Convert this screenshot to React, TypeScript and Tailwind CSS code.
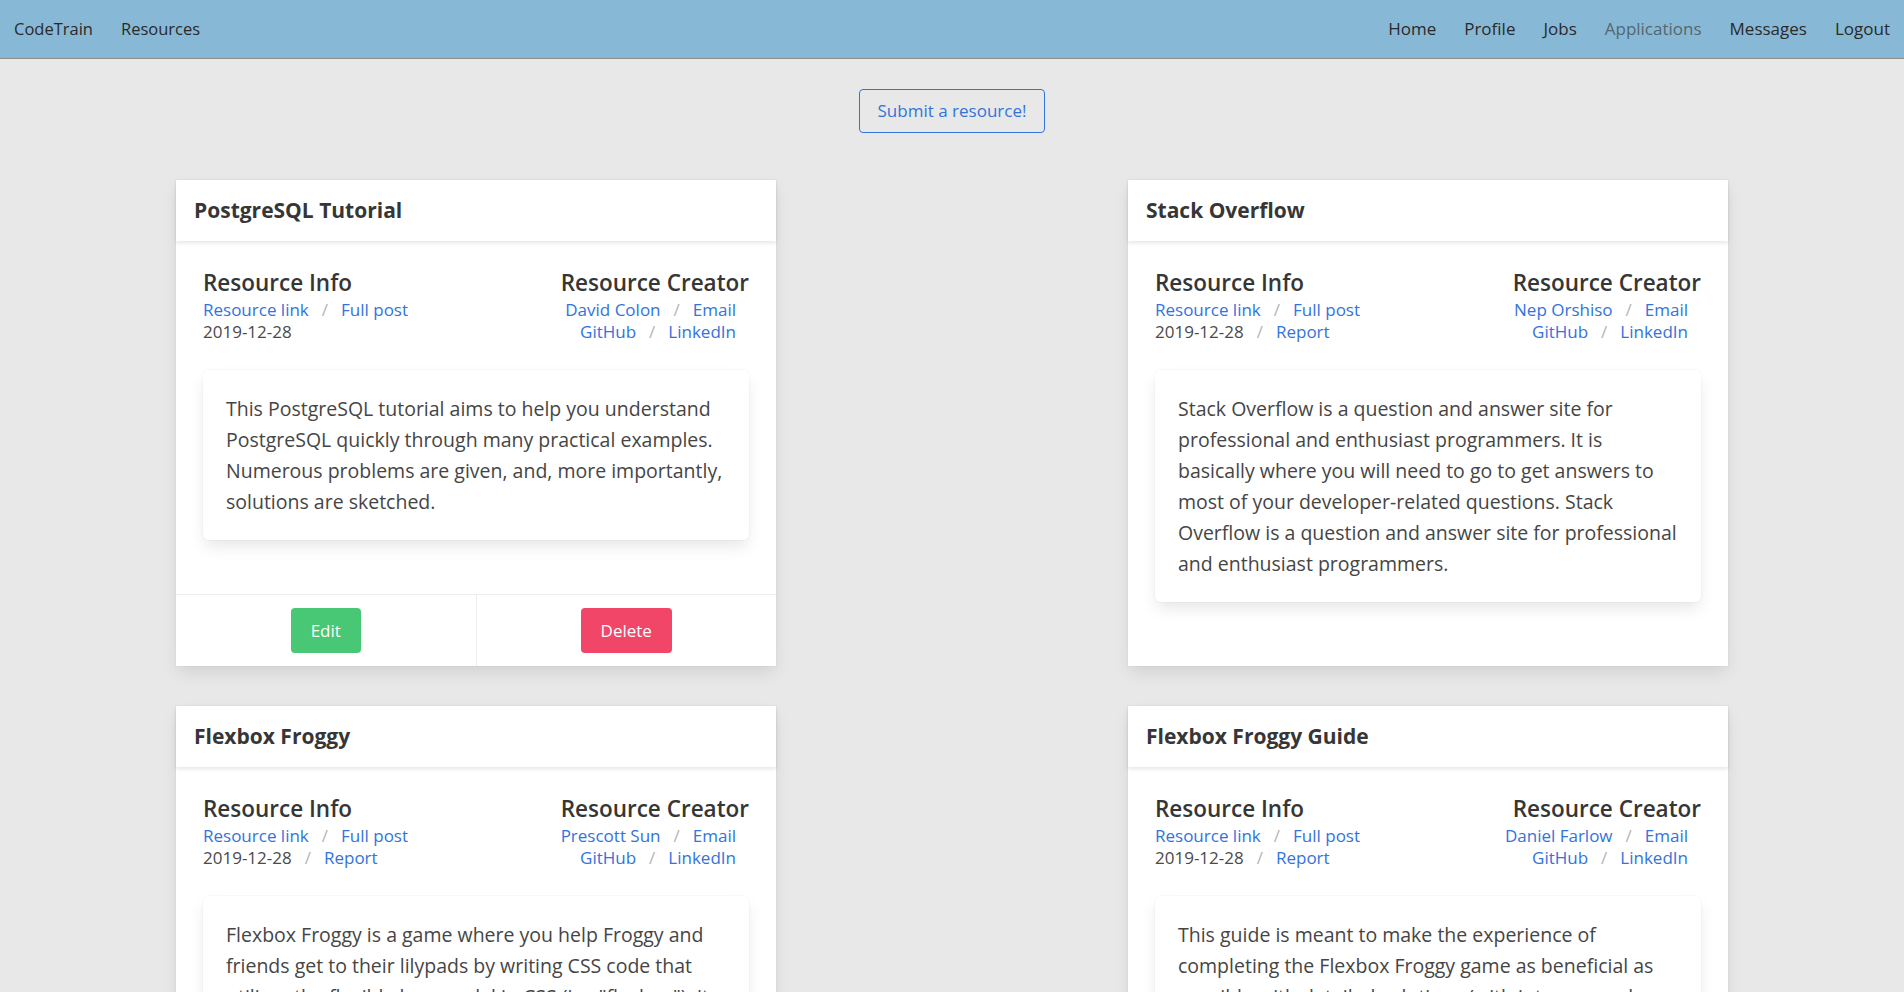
import React from "react";

type Crumb = { label: string; link?: boolean };

type Resource = {
  title: string;
  creator: string;
  report: boolean;
  text: string;
  owner?: boolean;
};

const resources: Resource[] = [
  {
    title: "PostgreSQL Tutorial",
    creator: "David Colon",
    report: false,
    owner: true,
    text: "This PostgreSQL tutorial aims to help you understand PostgreSQL quickly through many practical examples. Numerous problems are given, and, more importantly, solutions are sketched.",
  },
  {
    title: "Stack Overflow",
    creator: "Nep Orshiso",
    report: true,
    text: "Stack Overflow is a question and answer site for professional and enthusiast programmers. It is basically where you will need to go to get answers to most of your developer-related questions. Stack Overflow is a question and answer site for professional and enthusiast programmers.",
  },
  {
    title: "Flexbox Froggy",
    creator: "Prescott Sun",
    report: true,
    text: "Flexbox Froggy is a game where you help Froggy and friends get to their lilypads by writing CSS code that utilizes the flexible box model in CSS (i.e. \"flexbox\"). It is a fun way to learn how flexbox works.",
  },
  {
    title: "Flexbox Froggy Guide",
    creator: "Daniel Farlow",
    report: true,
    text: "This guide is meant to make the experience of completing the Flexbox Froggy game as beneficial as possible with detailed solutions (with interspersed notes) for every one of the levels.",
  },
];

// bulma-like breadcrumb: "a / b / c"
const Breadcrumb = ({ items, right }: { items: Crumb[]; right?: boolean }) => (
  <ul className={`flex text-[17px] leading-[22px] ${right ? "justify-end" : ""}`}>
    {items.map((item, i) => (
      <li key={item.label} className="flex items-center">
        {i > 0 && <span className="text-[#b5b5b5]">/</span>}
        <span
          className={`px-[13px] ${i === 0 ? "pl-0" : ""} ${
            item.link ? "text-[#3273dc] cursor-pointer" : "text-[#4a4a4a]"
          }`}
        >
          {item.label}
        </span>
      </li>
    ))}
  </ul>
);

const ResourceCard = ({ res }: { res: Resource }) => {
  const dateLine: Crumb[] = [{ label: "2019-12-28" }];
  if (res.report) dateLine.push({ label: "Report", link: true });

  return (
    <div className="w-[600px] mx-auto bg-white flex flex-col shadow-[0_8px_16px_-2px_rgba(10,10,10,0.1),0_0_0_1px_rgba(10,10,10,0.02)]">
      {/* header */}
      <div className="h-[61px] px-[18px] flex items-center shadow-[0_2px_4px_rgba(10,10,10,0.1)]">
        <h2 className="text-[21px] font-bold text-[#363636]">{res.title}</h2>
      </div>

      {/* content */}
      <div className="px-[27px] pt-[26px] pb-[54px]">
        <div className="flex justify-between">
          <div>
            <h3 className="text-[22.5px] leading-[32px] font-semibold text-[#363636]">
              Resource Info
            </h3>
            <Breadcrumb
              items={[
                { label: "Resource link", link: true },
                { label: "Full post", link: true },
              ]}
            />
            <Breadcrumb items={dateLine} />
          </div>
          <div className="text-right">
            <h3 className="text-[22.5px] leading-[32px] font-semibold text-[#363636]">
              Resource Creator
            </h3>
            <Breadcrumb
              right
              items={[
                { label: res.creator, link: true },
                { label: "Email", link: true },
              ]}
            />
            <Breadcrumb
              right
              items={[
                { label: "GitHub", link: true },
                { label: "LinkedIn", link: true },
              ]}
            />
          </div>
        </div>

        <div className="mt-[27px] bg-white rounded-[6px] p-[23px] text-[19.5px] leading-[31px] text-[#454545] shadow-[0_8px_16px_-2px_rgba(10,10,10,0.1),0_0_0_1px_rgba(10,10,10,0.02)]">
          {res.text}
        </div>
      </div>

      {/* footer */}
      {res.owner && (
        <div className="mt-auto h-[72px] border-t border-[#ededed] flex">
          <div className="flex-1 flex items-center justify-center border-r border-[#ededed]">
            <button className="h-[45px] px-5 rounded-[4px] bg-[#48c774] text-white text-[17px]">
              Edit
            </button>
          </div>
          <div className="flex-1 flex items-center justify-center">
            <button className="h-[45px] px-5 rounded-[4px] bg-[#f14668] text-white text-[17px]">
              Delete
            </button>
          </div>
        </div>
      )}
    </div>
  );
};

export default function App() {
  const leftLinks = ["CodeTrain", "Resources"];
  const rightLinks = ["Home", "Profile", "Jobs", "Applications", "Messages", "Logout"];

  return (
    <div className="min-h-screen bg-[#e8e8e8] font-['Open_Sans',sans-serif]">
      {/* navbar */}
      <nav className="h-[59px] bg-[#87b9d7] border-b border-[#8c8c8c] flex items-center justify-between text-[16.5px] text-[#2a2a2a]">
        <div className="flex">
          {leftLinks.map((l) => (
            <a key={l} className="px-[14px] cursor-pointer">
              {l}
            </a>
          ))}
        </div>
        <div className="flex text-[17px]">
          {rightLinks.map((l) => (
            <a
              key={l}
              className={`px-[14px] cursor-pointer ${
                l === "Applications" ? "text-[#55666f]" : ""
              }`}
            >
              {l}
            </a>
          ))}
        </div>
      </nav>

      <div className="flex justify-center pt-[30px]">
        <button className="h-[44px] px-[18px] rounded-[4px] border border-[#3273dc] text-[#3273dc] text-[17px]">
          Submit a resource!
        </button>
      </div>

      <div className="grid grid-cols-2 gap-y-[40px] pt-[47px] pb-10">
        {resources.map((r) => (
          <ResourceCard key={r.title} res={r} />
        ))}
      </div>
    </div>
  );
}
